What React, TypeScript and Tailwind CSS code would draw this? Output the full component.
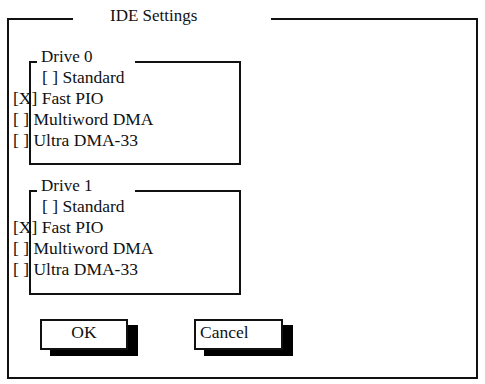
import React from "react";

function DriveBox({ label, top, height }: { label: string; top: string; height: string }) {
  const lines = [
    { t: "[ ] Standard", cls: "ml-[11px]" },
    { t: "[X] Fast PIO", cls: "-ml-[18px]" },
    { t: "[ ] Multiword DMA", cls: "-ml-[18px]" },
    { t: "[ ] Ultra DMA-33", cls: "-ml-[18px]" },
  ];
  return (
    <div className={`${top} ${height} ml-[20px] w-[212px] border-2 border-[#111]`}>
      <div className="-mt-[17px] ml-[6px] w-[98px] bg-white pl-[4px] leading-[21px]">{label}</div>
      {lines.map((l) => (
        <div key={l.t} className={`${l.cls} whitespace-pre text-[17.5px] leading-[21px]`}>
          {l.t}
        </div>
      ))}
    </div>
  );
}

export default function App() {
  return (
    <div
      className="relative h-[384px] w-[485px] overflow-hidden bg-white text-[17px] text-[#111]"
      style={{ fontFamily: '"Liberation Serif", "Times New Roman", serif' }}
    >
      <div className="ml-[7px] mt-[18px] h-[361px] w-[471px] border-2 border-[#111]">
        <div className="-mt-[15px] ml-[64px] w-[198px] bg-white pl-[37px] leading-[21px]">IDE Settings</div>
        <DriveBox label="Drive 0" top="mt-[35px]" height="h-[104px]" />
        <DriveBox label="Drive 1" top="mt-[25px]" height="h-[105px]" />
        <div className="ml-[31px] mt-[24px] flex">
          <div className="h-[31px] w-[88px] border-2 border-[#111] bg-white text-center text-[17.5px] leading-[23px] shadow-[10px_6px_0_0_#000]">
            OK
          </div>
          <div className="ml-[66px] h-[31px] w-[89px] border-2 border-[#111] bg-white pl-[4px] text-[17.5px] leading-[23px] shadow-[10px_6px_0_0_#000]">
            Cancel
          </div>
        </div>
      </div>
    </div>
  );
}
